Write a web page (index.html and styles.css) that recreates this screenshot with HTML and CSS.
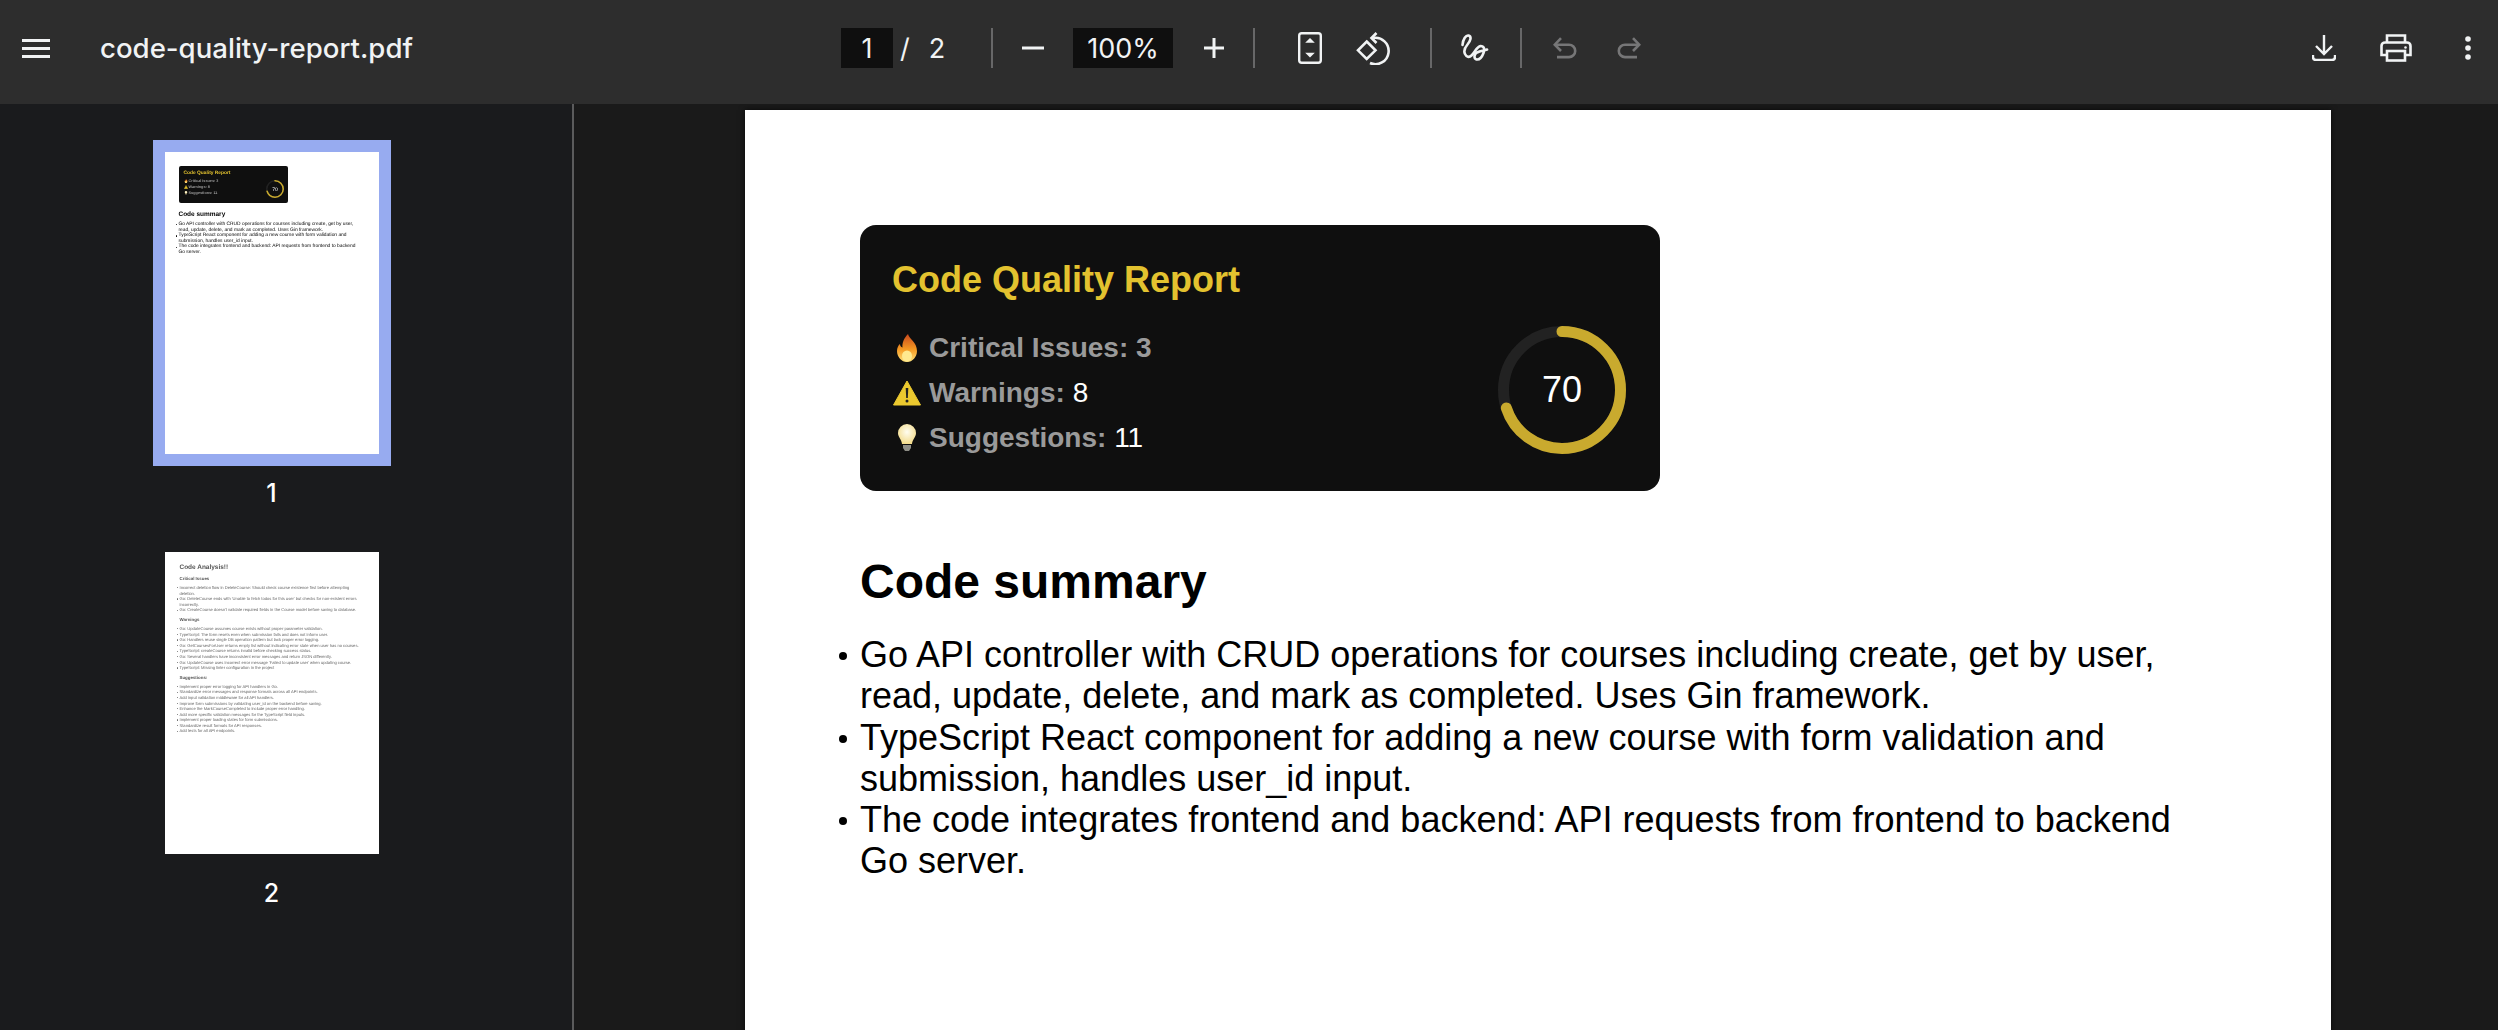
FILE: index.html
```html
<!DOCTYPE html>
<html lang="en">
<head>
  <meta charset="UTF-8">
  <title>code-quality-report.pdf</title>
  <link rel="stylesheet" href="styles.css">
</head>
<body>

<svg class="defs" width="0" height="0">
  <defs>
    <linearGradient id="flameFill" x1="0" y1="1" x2="0" y2="0">
      <stop offset="0" stop-color="#ffe27a"/>
      <stop offset="0.45" stop-color="#f59a23"/>
      <stop offset="1" stop-color="#c8481c"/>
    </linearGradient>
    <radialGradient id="bulbFill" cx="0.5" cy="0.4" r="0.6">
      <stop offset="0" stop-color="#fffdf0"/>
      <stop offset="1" stop-color="#f3dc8c"/>
    </radialGradient>
    <symbol id="flame" viewBox="0 0 24 28">
      <path d="M13 0c1 5 9 8 9 17 0 6-4.500 11-10 11S2 23 2 17c0-3 1.500-6 3-7 0 2 1 3 2.500 3.500C7 9 9 4 13 0z" fill="url(#flameFill)"/>
      <ellipse cx="12" cy="22" rx="5" ry="5.500" fill="#ffe98f"/>
    </symbol>
    <symbol id="warn" viewBox="0 0 28 26">
      <path d="M14 1 27.500 25H.5z" fill="#ecc92f" stroke="#ecc92f" stroke-linejoin="round"/>
      <path d="M12.700 8h2.600l-.5 10h-1.600z" fill="#222"/>
      <circle cx="14" cy="21" r="1.500" fill="#222"/>
    </symbol>
    <symbol id="bulb" viewBox="0 0 20 28">
      <path d="M10 0a9 9 0 0 1 9 9c0 4-3.500 6-4 11H5c-.5-5-4-7-4-11a9 9 0 0 1 9-9z" fill="url(#bulbFill)"/>
      <path d="M6 21h8v3l-2 3H8l-2-3z" fill="#8d8d86"/>
    </symbol>
  </defs>
</svg>

<header class="toolbar">
  <div class="toolbar-left">
    <svg class="icon menu-icon" viewBox="0 0 28 19" fill="#f1f3f4"><path d="M0 0h28v3H0zM0 8h28v3H0zM0 16h28v3H0z"/></svg>
    <span class="file-name">code-quality-report.pdf</span>
  </div>
  <div class="toolbar-center">
    <div class="page-nav">
      <span class="num-box page-box">1</span>
      <span class="page-sep">/</span>
      <span class="page-total">2</span>
    </div>
    <span class="divider"></span>
    <svg class="icon zoom-btn minus-btn" viewBox="0 0 22 22" fill="#f1f3f4"><path d="M0 9.500h22v3H0z"/></svg>
    <span class="num-box zoom-box">100%</span>
    <svg class="icon zoom-btn" viewBox="0 0 22 22" fill="#f1f3f4"><path d="M1 9.500h8.500V1h3v8.500H21v3h-8.500V21h-3v-8.500H1z"/></svg>
    <span class="divider after-zoom"></span>
    <svg class="icon fit-icon" viewBox="0 0 24 32" fill="none" stroke="#f1f3f4" stroke-width="2.400"><rect x="1.200" y="1.200" width="21.600" height="29.600" rx="2.500"/><path d="M12 6l4.800 4.800H7.200zM12 25.500l-4.800-4.800h9.600z" fill="#f1f3f4" stroke="none"/></svg>
    <svg class="icon rotate-icon" viewBox="0 0 35 33" fill="none" stroke="#f1f3f4" stroke-width="2.600"><path d="M10.700 9.500 19.500 18.300 10.700 27 2 18.300z"/><path d="M17 6A13.200 13.200 0 1 1 14 31"/><path d="M20.500 1 15.500 6l5 5"/></svg>
    <span class="divider after-rotate"></span>
    <svg class="icon draw-icon" viewBox="0 0 28 28" fill="none" stroke="#f1f3f4" stroke-width="2.600" stroke-linecap="round"><path d="M1.500 11C2 5 5 1 7.500 1.500 11 2.500 9.500 7 6.500 10.500 3.500 14 2.500 17 4 20c1.500 3 4 4 6.500 1.500 3-3 5.500-9 9-9.500 3.500 0 4.500 3 3 7-1.500 4-4 7-7 6.500-3-1-2.500-5 .5-7 3-1.500 7-2 10-3"/></svg>
    <span class="divider after-draw"></span>
    <svg class="icon undo-icon" viewBox="0 0 24 22" fill="none" stroke="#767677" stroke-width="2.600"><path d="M8 1.200 1.800 7.700 8 14"/><path d="M2 7.700h14a6.200 6.200 0 0 1 0 12.400H4"/></svg>
    <svg class="icon undo-icon redo-icon" viewBox="0 0 24 22" fill="none" stroke="#767677" stroke-width="2.600"><path d="M16 1.200l6.200 6.500L16 14"/><path d="M22 7.700H8a6.200 6.200 0 0 0 0 12.400h12"/></svg>
  </div>
  <div class="toolbar-right">
    <svg class="icon download-icon" viewBox="0 0 24 26" fill="none" stroke="#f1f3f4" stroke-width="2.400"><path d="M12 0v19M4 11l8 8 8-8M1 20v2c0 2 1 3 3 3h16c2 0 3-1 3-3v-2"/></svg>
    <svg class="icon print-icon" viewBox="0 0 32 28" fill="none" stroke="#f1f3f4" stroke-width="2.600"><path d="M7 9V1.500h18V9M7 21H1.500v-9c0-2 1.500-3.500 3.500-3.500h22c2 0 3.500 1.500 3.500 3.500v9H25"/><rect x="7" y="17" width="18" height="9.500"/><circle cx="25.500" cy="13.500" r="1.300" fill="#f1f3f4" stroke="none"/></svg>
    <svg class="icon more-icon" viewBox="0 0 6 24" fill="#f1f3f4"><circle cx="3" cy="3" r="2.800"/><circle cx="3" cy="12" r="2.800"/><circle cx="3" cy="21" r="2.800"/></svg>
  </div>
</header>

<div class="content">
  <aside class="sidebar">
    <div class="thumb-item">
      <div class="thumb-frame selected">
        <div class="thumb-page">
          <div class="mini-card">
            <div class="mini-stats">
              <div class="mini-title">Code Quality Report</div>
              <div class="mini-row"><svg class="mini-emoji"><use href="#flame"/></svg>Critical Issues: 3</div>
              <div class="mini-row"><svg class="mini-emoji"><use href="#warn"/></svg>Warnings: 8</div>
              <div class="mini-row"><svg class="mini-emoji"><use href="#bulb"/></svg>Suggestions: 11</div>
            </div>
            <svg class="mini-ring" viewBox="0 0 128 128">
              <circle cx="64" cy="64" r="58.500" fill="none" stroke="#222" stroke-width="11"/>
              <circle cx="64" cy="64" r="58.500" fill="none" stroke="#c9aa2e" stroke-width="11" stroke-linecap="round" pathLength="100" stroke-dasharray="70 100" transform="rotate(-90 64 64)"/>
              <text x="64" y="77" text-anchor="middle" font-size="36" fill="#fff" font-family="Liberation Sans">70</text>
            </svg>
          </div>
          <div class="mini-h1">Code summary</div>
          <ul class="mini-list">
            <li>Go API controller with CRUD operations for courses including create, get by user, read, update, delete, and mark as completed. Uses Gin framework.</li>
            <li>TypeScript React component for adding a new course with form validation and submission, handles user_id input.</li>
            <li>The code integrates frontend and backend: API requests from frontend to backend Go server.</li>
          </ul>
        </div>
      </div>
      <span class="thumb-num">1</span>
    </div>

    <div class="thumb-item">
      <div class="thumb-frame">
        <div class="thumb-page second">
          <div class="mini-h1 grey">Code Analysis!!</div>
          <div class="mini-h2">Critical Issues</div>
          <ul class="mini-list grey small">
            <li>Incorrect deletion flow in DeleteCourse: Should check course existence first before attempting deletion.</li>
            <li>Go: DeleteCourse ends with 'Unable to fetch todos for this user' but checks for non-existent errors incorrectly.</li>
            <li>Go: CreateCourse doesn't validate required fields in the Course model before saving to database.</li>
          </ul>
          <div class="mini-h2">Warnings</div>
          <ul class="mini-list grey small">
            <li>Go: UpdateCourse assumes course exists without proper parameter validation.</li>
            <li>TypeScript: The form resets even when submission fails and does not inform user.</li>
            <li>Go: Handlers reuse single DB operation pattern but lack proper error logging.</li>
            <li>Go: GetCoursesForUser returns empty list without indicating error state when user has no courses.</li>
            <li>TypeScript: createCourse returns invalid before checking success status.</li>
            <li>Go: Several handlers have inconsistent error messages and return JSON differently.</li>
            <li>Go: UpdateCourse uses incorrect error message 'Failed to update user' when updating course.</li>
            <li>TypeScript: Missing linter configuration in the project</li>
          </ul>
          <div class="mini-h2">Suggestions:</div>
          <ul class="mini-list grey small">
            <li>Implement proper error logging for API handlers in Go.</li>
            <li>Standardize error messages and response formats across all API endpoints.</li>
            <li>Add input validation middleware for all API handlers.</li>
            <li>Improve form submissions by validating user_id on the backend before saving.</li>
            <li>Enhance the MarkCourseCompleted to include proper error handling.</li>
            <li>Add more specific validation messages for the TypeScript field inputs.</li>
            <li>Implement proper loading states for form submissions.</li>
            <li>Standardize result formats for API responses.</li>
            <li>Add tests for all API endpoints.</li>
          </ul>
        </div>
      </div>
      <span class="thumb-num">2</span>
    </div>
  </aside>

  <main class="viewer">
    <article class="page">
      <section class="report-card">
        <div class="report-stats">
          <h2 class="report-title">Code Quality Report</h2>
          <div class="stat-row"><svg class="emoji"><use href="#flame"/></svg><span class="stat-label">Critical Issues: 3</span></div>
          <div class="stat-row"><svg class="emoji"><use href="#warn"/></svg><span class="stat-label">Warnings:</span>&nbsp;<span>8</span></div>
          <div class="stat-row"><svg class="emoji"><use href="#bulb"/></svg><span class="stat-label">Suggestions:</span>&nbsp;<span>11</span></div>
        </div>
        <div class="score-ring">
          <svg viewBox="0 0 128 128" width="128" height="128">
            <circle cx="64" cy="64" r="58.500" fill="none" stroke="#222" stroke-width="11"/>
            <circle cx="64" cy="64" r="58.500" fill="none" stroke="#c9aa2e" stroke-width="11" stroke-linecap="round" pathLength="100" stroke-dasharray="70 100" transform="rotate(-90 64 64)"/>
          </svg>
          <span class="score-value">70</span>
        </div>
      </section>
      <h1 class="summary-title">Code summary</h1>
      <ul class="summary-list">
        <li>Go API controller with CRUD operations for courses including create, get by user, read, update, delete, and mark as completed. Uses Gin framework.</li>
        <li>TypeScript React component for adding a new course with form validation and submission, handles user_id input.</li>
        <li>The code integrates frontend and backend: API requests from frontend to backend Go server.</li>
      </ul>
    </article>
  </main>
</div>

</body>
</html>
```

FILE: styles.css
```css
* {
  box-sizing: border-box;
}
html, body {
  height: 100%;
}
body {
  margin: 0;
  overflow: hidden;
  background-color: #1a1b1d;
  color: #f1f3f4;
  font-family: Inter, sans-serif;
  display: flex;
  flex-direction: column;
}
.defs {
  display: block;
  height: 0;
}
.icon {
  display: block;
  flex: none;
}

/* barra superior */
.toolbar {
  height: 104px;
  flex: none;
  background-color: #2d2d2d;
  display: flex;
  align-items: center;
  padding-bottom: 8px;
}
.toolbar-left {
  width: 841px;
  flex: none;
  display: flex;
  align-items: center;
  padding-left: 22px;
}
.menu-icon {
  width: 28px;
  height: 19px;
}
.file-name {
  margin-left: 50px;
  font-size: 27.600px;
  font-weight: 500;
}
.toolbar-center {
  display: flex;
  align-items: center;
  height: 40px;
}
.page-nav {
  width: 150px;
  display: flex;
  align-items: center;
  font-size: 27px;
}
.num-box {
  height: 40px;
  background-color: #0f0f0f;
  display: flex;
  align-items: center;
  justify-content: center;
  font-size: 27px;
}
.page-box {
  width: 52px;
}
.page-sep {
  margin-left: 7px;
}
.page-total {
  margin-left: 19px;
}
.divider {
  width: 2px;
  height: 40px;
  background-color: #676768;
}
.zoom-btn {
  width: 22px;
  height: 22px;
}
.minus-btn {
  margin-left: 29px;
}
.zoom-box {
  width: 100px;
  margin: 0 30px 0 29px;
}
.after-zoom {
  margin-left: 28px;
}
.fit-icon {
  width: 24px;
  height: 32px;
  margin-left: 43px;
}
.rotate-icon {
  width: 35px;
  height: 33px;
  margin-left: 34px;
}
.after-rotate {
  margin-left: 39px;
}
.draw-icon {
  width: 28px;
  height: 28px;
  margin-left: 29px;
}
.after-draw {
  margin-left: 31px;
}
.undo-icon {
  width: 24px;
  height: 22px;
  margin-left: 31px;
}
.redo-icon {
  margin-left: 40px;
}
.toolbar-right {
  flex: 1;
  display: flex;
  align-items: center;
  justify-content: flex-end;
  padding-right: 27px;
}
.download-icon {
  width: 24px;
  height: 26px;
}
.print-icon {
  width: 32px;
  height: 28px;
  margin-left: 44px;
}
.more-icon {
  width: 6px;
  height: 24px;
  margin-left: 53px;
}

/* contenido */
.content {
  flex: 1;
  display: flex;
  min-height: 0;
}

/* miniaturas */
.sidebar {
  width: 574px;
  flex: none;
  border-right: 2px solid #5b5b5c;
  display: flex;
  flex-direction: column;
  align-items: center;
  padding: 36px 29px 0 0;
}
.thumb-item {
  display: flex;
  flex-direction: column;
  align-items: center;
}
.thumb-item + .thumb-item {
  margin-top: 32px;
}
.thumb-frame {
  padding: 12px;
}
.thumb-frame.selected {
  background-color: #97abf0;
}
.thumb-page {
  width: 214px;
  height: 302px;
  background-color: #fff;
  padding: 14px 22px 0 14px;
  overflow: hidden;
  filter: blur(0.3px);
  color: #000;
  font-family: "Liberation Sans", sans-serif;
  text-rendering: geometricPrecision;
}
.thumb-page.second {
  padding: 12px 16px 0 15px;
}
.thumb-num {
  margin-top: 12px;
  font-size: 25px;
  line-height: 30px;
  font-weight: 500;
  color: #fff;
}
.mini-card {
  width: 109px;
  height: 37px;
  background-color: #0f0f0f;
  border-radius: 2px;
  display: flex;
  justify-content: space-between;
  padding: 5px 4px 0 5px;
}
.mini-title {
  color: #e3c22f;
  font-size: 4.860px;
  font-weight: 700;
  line-height: 6px;
  margin-bottom: 1px;
}
.mini-row {
  color: #9a9a9a;
  font-size: 3.780px;
  font-weight: 700;
  line-height: 6px;
  display: flex;
  align-items: center;
}
.mini-emoji {
  width: 4px;
  height: 4px;
  margin-right: 1px;
}
.mini-ring {
  width: 18px;
  height: 18px;
  margin-top: 9px;
}
.mini-h1 {
  font-size: 6.480px;
  font-weight: 700;
  margin-top: 8px;
  line-height: 8px;
}
.mini-h1.grey {
  color: #555;
  margin-top: 0;
}
.mini-h2 {
  font-size: 4.400px;
  font-weight: 700;
  color: #555;
  margin-top: 4px;
  line-height: 6px;
}
.mini-list {
  margin: 3px 0 0;
  padding: 0;
  list-style: none;
  font-size: 4.860px;
  line-height: 5.600px;
}
.mini-list li {
  position: relative;
}
.mini-list li::before {
  content: "";
  position: absolute;
  left: -3px;
  top: 2.200px;
  width: 1.200px;
  height: 1.200px;
  border-radius: 50%;
  background-color: currentColor;
}
.mini-list.grey {
  color: #666;
}
.mini-list.small {
  font-size: 4.100px;
  line-height: 5.600px;
}

/* visor del pdf */
.viewer {
  flex: 1;
  min-width: 0;
  display: flex;
  justify-content: center;
  padding-top: 6px;
  background-color: #1a1a1a;
  overflow: hidden;
}
.page {
  width: 1586px;
  height: 2244px;
  flex: none;
  background-color: #fff;
  color: #000;
  font-family: "Liberation Sans", sans-serif;
  padding: 115px 160px 0 115px;
  margin-left: 4px;
  box-shadow: 0 0 6px rgba(0, 0, 0, 0.7);
}
.report-card {
  width: 800px;
  height: 266px;
  background-color: #0f0f0f;
  border-radius: 16px;
  padding: 34px 34px 0 32px;
  display: flex;
  justify-content: space-between;
}
.report-title {
  margin: 0 0 25px;
  color: #e3c22f;
  font-size: 36px;
  line-height: 42px;
  font-weight: 700;
}
.stat-row {
  color: #fff;
  font-size: 28px;
  line-height: 44.800px;
  display: flex;
  align-items: center;
}
.stat-label {
  color: #9a9a9a;
  font-weight: 700;
}
.emoji {
  width: 28px;
  height: 28px;
  margin: 0 8px 0 1px;
}
.score-ring {
  position: relative;
  width: 128px;
  height: 128px;
  margin-top: 67px;
}
.score-ring svg {
  display: block;
}
.score-value {
  position: absolute;
  inset: 0;
  display: flex;
  align-items: center;
  justify-content: center;
  color: #fff;
  font-size: 36px;
}
.summary-title {
  margin: 63px 0 0;
  font-size: 48px;
  line-height: 56px;
  font-weight: 700;
}
.summary-list {
  margin: 24px 0 0;
  padding: 0;
  font-size: 36px;
  line-height: 41.300px;
  list-style: none;
}
.summary-list li {
  position: relative;
}
.summary-list li::before {
  content: "";
  position: absolute;
  left: -21px;
  top: 18px;
  width: 8px;
  height: 8px;
  border-radius: 50%;
  background-color: #000;
}
```
